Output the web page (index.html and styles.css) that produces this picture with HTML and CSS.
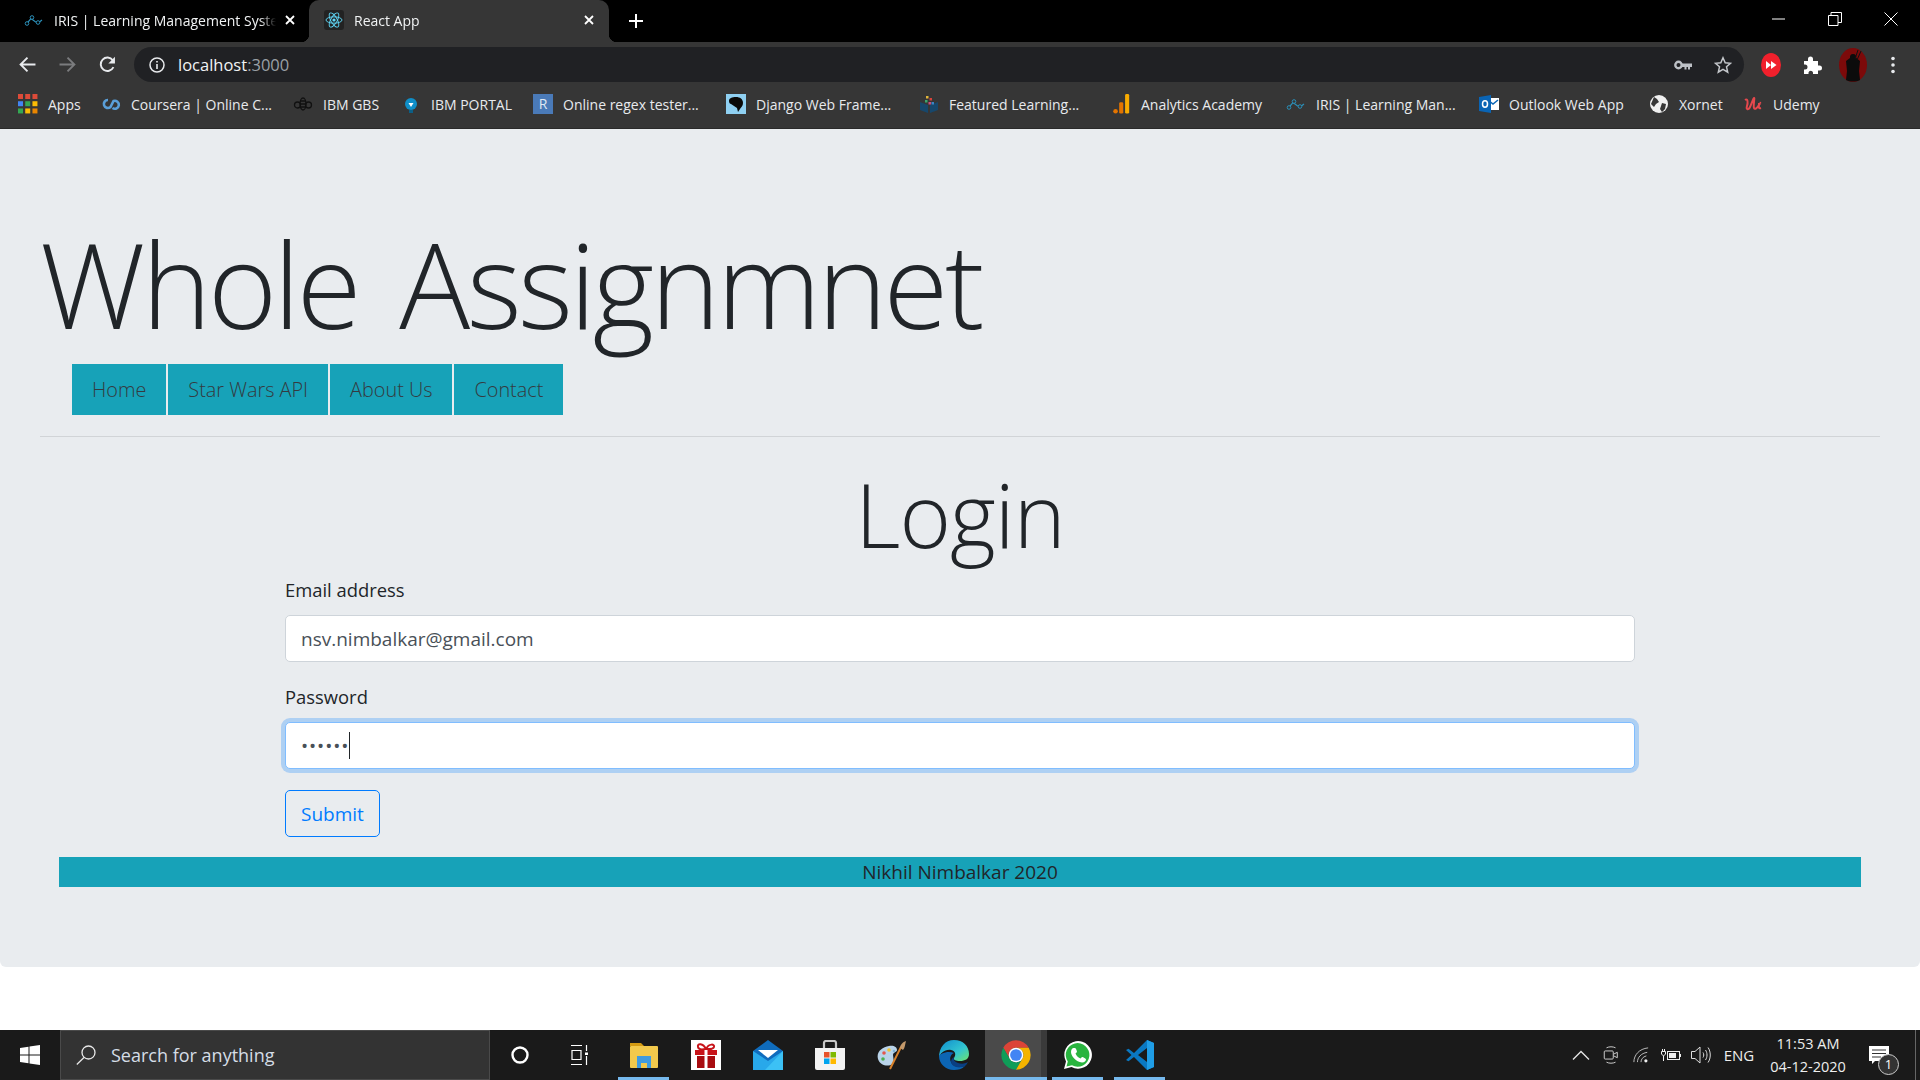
FILE: index.html
```html
<!DOCTYPE html>
<html lang="en">
<head>
    <meta charset="UTF-8">
    <meta name="viewport" content="width=device-width, initial-scale=1.0">
    <title>React App</title>
    <link rel="stylesheet" href="styles.css">
</head>
<body>
    <!-- browser frame -->
    <div class="tabstrip">
        <div class="tab">
            <svg class="tab-icon" viewBox="0 0 20 20"><path d="M2 14.5 7 8.5l4 3 3 1.5 4-3" fill="none" stroke="#2b8fb8" stroke-width="1.2"/><circle cx="3" cy="13.5" r="1.8" fill="#000" stroke="#2b8fb8"/><circle cx="8" cy="7.5" r="1.8" fill="#000" stroke="#2b8fb8"/><circle cx="14" cy="12.5" r="1.8" fill="#000" stroke="#2b8fb8"/></svg>
            <span class="tab-title">IRIS | Learning Management System</span>
            <svg class="tab-close" viewBox="0 0 10 10"><path d="M1 1l8 8M9 1L1 9" stroke="#fff" stroke-width="1.8"/></svg>
        </div>
        <div class="tab tab-active">
            <svg class="tab-icon react-icon" viewBox="0 0 20 20"><rect width="20" height="20" rx="3" fill="#222"/><g fill="none" stroke="#61dafb" stroke-width=".9"><ellipse cx="10" cy="10" rx="8" ry="3.2"/><ellipse cx="10" cy="10" rx="8" ry="3.2" transform="rotate(60 10 10)"/><ellipse cx="10" cy="10" rx="8" ry="3.2" transform="rotate(120 10 10)"/></g><circle cx="10" cy="10" r="1.6" fill="#61dafb"/></svg>
            <span class="tab-title">React App</span>
            <svg class="tab-close" viewBox="0 0 10 10"><path d="M1 1l8 8M9 1L1 9" stroke="#fff" stroke-width="1.8"/></svg>
        </div>
        <svg class="new-tab" viewBox="0 0 14 14"><path d="M7 0v14M0 7h14" stroke="#fff" stroke-width="2"/></svg>
        <div class="window-buttons">
            <svg class="win-btn" viewBox="0 0 14 14"><path d="M0 7h13" stroke="#fff"/></svg>
            <svg class="win-btn" viewBox="0 0 14 14"><path d="M.5 3.5h9.5v10H.5zM3 3.5V.5h10.5v10H10" fill="none" stroke="#fff"/></svg>
            <svg class="win-btn" viewBox="0 0 14 14"><path d="M.5.5l13 13M13.5.5l-13 13" stroke="#fff"/></svg>
        </div>
    </div>

    <div class="toolbar">
        <svg class="nav-icon" viewBox="0 0 16 16"><path d="M15.5 8H2M8 1.5 1.5 8 8 14.5" fill="none" stroke="#e8eaed" stroke-width="1.8"/></svg>
        <svg class="nav-icon" viewBox="0 0 16 16"><path d="M.5 8H14M8 1.5 14.5 8 8 14.5" fill="none" stroke="#7b7c7e" stroke-width="1.8"/></svg>
        <svg class="nav-icon" viewBox="0 0 16 16"><path d="M13.6 10.5A6.3 6.3 0 1 1 13 4" fill="none" stroke="#e8eaed" stroke-width="1.8"/><path d="M15 .8V7H8.8z" fill="#e8eaed"/></svg>
        <div class="omnibox">
            <svg class="info-icon" viewBox="0 0 16 16"><circle cx="8" cy="8" r="7" fill="none" stroke="#e8eaed" stroke-width="1.5"/><path d="M8 7v5M8 4v1.6" stroke="#e8eaed" stroke-width="1.6"/></svg>
            <span class="url">localhost<span class="url-port">:3000</span></span>
            <svg class="omni-key" viewBox="0 0 18 10"><circle cx="4.5" cy="5" r="3.2" fill="none" stroke="#bdc1c6" stroke-width="2.4"/><path d="M8 3.500h10v3.500H16V9.500h-2V7h-1.500v2.500h-2V7H8z" fill="#bdc1c6"/></svg>
            <svg class="omni-star" viewBox="0 0 18 18"><path d="M9 1.8l2.2 5 5.3.5-4 3.5 1.200 5.300L9 13.300l-4.700 2.800 1.200-5.300-4-3.500 5.300-.5z" fill="none" stroke="#c4c7cb" stroke-width="1.5"/></svg>
        </div>
        <div class="ext-icons">
            <svg class="ext" viewBox="0 0 20 24"><ellipse cx="10" cy="12" rx="10" ry="12" fill="#f1202c"/><path d="M5 8l5 4-5 4zM10 8l5.5 4-5.5 4z" fill="#fff"/></svg>
            <svg class="ext" viewBox="0 0 20 20"><path d="M2 6h4V4a2.500 2.500 0 0 1 5 0v2h5v4.500h1.500a2.500 2.500 0 0 1 0 5H16V19H11v-1.500a2.300 2.300 0 0 0-4.500 0V19H2v-4.500h1a2.500 2.500 0 0 0 0-5H2z" fill="#fff"/></svg>
            <svg class="ext ext-avatar" viewBox="0 0 28 34"><ellipse cx="14" cy="17" rx="14" ry="17" fill="#7c0a0a"/><path d="M14 6c2.500 0 3.500 2 3.300 4l3.700 3-1 10 1 9c-4 2-10 2-14 0l1-9-1-10 4-3c-.2-2 .5-4 3-4z" fill="#0c0c0c"/><path d="M19 2l-3 9M22 3l-4 9" stroke="#111" stroke-width="1"/></svg>
            <svg class="ext ext-menu" viewBox="0 0 4 18"><circle cx="2" cy="2.5" r="1.8" fill="#e8eaed"/><circle cx="2" cy="9" r="1.8" fill="#e8eaed"/><circle cx="2" cy="15.5" r="1.8" fill="#e8eaed"/></svg>
        </div>
    </div>

    <div class="bookmarks">
        <div class="bookmark">
            <svg class="bm-icon" viewBox="0 0 18 18"><rect x="0" y="0" width="4.5" height="4.5" fill="#dd4b39"/><rect x="6.5" y="0" width="4.5" height="4.5" fill="#dd4b39"/><rect x="13" y="0" width="4.5" height="4.5" fill="#dd4b39"/><rect x="0" y="6.5" width="4.5" height="4.5" fill="#4285f4"/><rect x="6.5" y="6.5" width="4.5" height="4.5" fill="#34a853"/><rect x="13" y="6.5" width="4.5" height="4.5" fill="#fbbc05"/><rect x="0" y="13" width="4.5" height="4.5" fill="#34a853"/><rect x="6.5" y="13" width="4.5" height="4.5" fill="#fbbc05"/><rect x="13" y="13" width="4.5" height="4.5" fill="#ea8600"/></svg>
            <span>Apps</span>
        </div>
        <div class="bookmark">
            <svg class="bm-icon" viewBox="0 0 20 20"><path d="M7 6a4 4 0 1 0 2.5 7l3-6a4 4 0 1 1-1 7" fill="none" stroke="#5a9fd8" stroke-width="2.6"/></svg>
            <span>Coursera | Online C...</span>
        </div>
        <div class="bookmark">
            <svg class="bm-icon" viewBox="0 0 20 20"><g fill="none" stroke="#111" stroke-width="1.3"><ellipse cx="10" cy="10" rx="3" ry="6"/><circle cx="4.5" cy="11" r="3"/><circle cx="15.5" cy="11" r="3"/><path d="M7 7h6M7 10h6M7 13h6"/></g></svg>
            <span>IBM GBS</span>
        </div>
        <div class="bookmark">
            <svg class="bm-icon" viewBox="0 0 20 20"><circle cx="10" cy="10" r="6" fill="#0f8ec7"/><path d="M7.5 9h5L10 13z" fill="#fff"/><rect x="8" y="16" width="4" height="3" fill="#0b5f86"/><path d="M10 0v2M3 2l1.500 1.500M17 2l-1.500 1.500" stroke="#2a3a48" stroke-width="1.2"/></svg>
            <span>IBM PORTAL</span>
        </div>
        <div class="bookmark">
            <span class="bm-letter">R</span>
            <span>Online regex tester...</span>
        </div>
        <div class="bookmark">
            <svg class="bm-icon" viewBox="0 0 20 20"><rect width="20" height="20" fill="#8fd0f2"/><path d="M3 7c0-3 3-4 7-4 4 0 7 2 7 6 0 3-2 4-3 6l-2 3-1-4-3-2-3-2c-1 0-2-1-2-3z" fill="#0a0a0a"/></svg>
            <span>Django Web Frame...</span>
        </div>
        <div class="bookmark">
            <svg class="bm-icon" viewBox="0 0 20 20"><path d="M1 8l8 3v8l-8-3zM19 8l-8 3v8l8-3z" fill="#17476b"/><rect x="7" y="2" width="2.5" height="2.5" fill="#e2b63a"/><rect x="10.5" y="4" width="2.5" height="2.5" fill="#d8433a"/><rect x="6" y="6" width="2.5" height="2.5" fill="#3aa76d"/><rect x="9.5" y="8" width="2.5" height="2.5" fill="#c84a7c"/><rect x="12.5" y="8" width="2.5" height="2.5" fill="#3a86c8"/></svg>
            <span>Featured Learning...</span>
        </div>
        <div class="bookmark">
            <svg class="bm-icon" viewBox="0 0 20 22"><circle cx="4" cy="19" r="2.5" fill="#e37400"/><rect x="8" y="9" width="4.5" height="12.500" rx="1.5" fill="#e37400"/><rect x="14.5" y="0" width="4.5" height="21.5" rx="1.5" fill="#f9ab00"/></svg>
            <span>Analytics Academy</span>
        </div>
        <div class="bookmark">
            <svg class="bm-icon" viewBox="0 0 20 20"><path d="M2 14.5 7 8.5l4 3 3 1.5 4-3" fill="none" stroke="#2b8fb8" stroke-width="1.2"/><circle cx="3" cy="13.5" r="1.8" fill="#363636" stroke="#2b8fb8"/><circle cx="8" cy="7.5" r="1.8" fill="#363636" stroke="#2b8fb8"/><circle cx="14" cy="12.5" r="1.8" fill="#363636" stroke="#2b8fb8"/></svg>
            <span>IRIS | Learning Man...</span>
        </div>
        <div class="bookmark">
            <svg class="bm-icon" viewBox="0 0 20 20"><rect x="8" y="4" width="12" height="12" fill="#fff"/><path d="M9 6l5 4 5-4" fill="none" stroke="#0a64b4" stroke-width="1.5"/><path d="M0 3l12-2v18L0 17z" fill="#0a64b4"/><ellipse cx="6" cy="10" rx="2.5" ry="3.2" fill="none" stroke="#fff" stroke-width="1.5"/></svg>
            <span>Outlook Web App</span>
        </div>
        <div class="bookmark">
            <svg class="bm-icon" viewBox="0 0 20 20"><circle cx="10" cy="10" r="9" fill="#f0f0f0"/><path d="M5 3l3 2 2 3-3 2-2 3-3-3zM13 9l4 1-1 5-3 3-2-3z" fill="#363636"/></svg>
            <span>Xornet</span>
        </div>
        <div class="bookmark">
            <svg class="bm-icon" viewBox="0 0 20 20"><path d="M2 6c3-2 3 3 2 6s1 5 3 1 3-8 4-9-1 8 0 10 3 0 5-3 1-2 1-2M16 9c0 3-1 6 2 5" fill="none" stroke="#e5484d" stroke-width="2"/></svg>
            <span>Udemy</span>
        </div>
    </div>

    <!-- the react app -->
    <main class="jumbotron">
        <h1 class="display-title">Whole Assignmnet</h1>
        <ul class="main-nav">
            <li class="main-nav-item">Home</li>
            <li class="main-nav-item">Star Wars API</li>
            <li class="main-nav-item">About Us</li>
            <li class="main-nav-item">Contact</li>
        </ul>
        <hr class="divider">
        <h2 class="login-title">Login</h2>
        <form class="login-form">
            <div class="form-group">
                <label class="form-label" for="email">Email address</label>
                <input class="form-control" type="text" id="email" value="nsv.nimbalkar@gmail.com">
            </div>
            <div class="form-group">
                <label class="form-label" for="password">Password</label>
                <div class="form-control form-control-focus" id="password"><span class="dots">••••••</span><span class="caret"></span></div>
            </div>
            <button class="btn-submit" type="button">Submit</button>
        </form>
        <footer class="page-footer">Nikhil Nimbalkar 2020</footer>
    </main>

    <div class="page-rest"></div>

    <!-- windows taskbar -->
    <div class="taskbar">
        <div class="start">
            <svg class="start-logo" viewBox="0 0 20 20"><path d="M0 3l8.5-1.3v7.8H0zM9.5 1.500 20 0v9.500H9.500zM0 10.500h8.500v7.800L0 17zM9.500 10.500H20V20L9.500 18.500z" fill="#fff"/></svg>
        </div>
        <div class="search-box">
            <svg class="search-icon" viewBox="0 0 20 20"><circle cx="12.5" cy="7.5" r="6.5" fill="none" stroke="#e8e8e8" stroke-width="1.3"/><path d="M8 12.5.8 19.5" stroke="#e8e8e8" stroke-width="1.3"/></svg>
            <span>Search for anything</span>
        </div>
        <div class="task-tool"><svg class="tool-icon" viewBox="0 0 20 20"><circle cx="10" cy="10" r="7.5" fill="none" stroke="#fff" stroke-width="2.4"/></svg></div>
        <div class="task-tool"><svg class="tool-icon" viewBox="0 0 20 20"><path d="M1 .5h11M1 19.5h11M2 5.5h9v9H2zM16.5 0v6M16.5 11v9" fill="none" stroke="#fff" stroke-width="1.2"/><rect x="15" y="7.5" width="3" height="2.5" fill="#fff"/></svg></div>
        <div class="task-apps">
            <div class="task-app task-open">
                <svg class="app-icon" viewBox="0 0 30 30"><path d="M1 3h11l3 3h-14z" fill="#d39a12"/><rect x="1" y="6" width="28" height="22" rx="1" fill="#f2c94c"/><path d="M8 28V16h14v12h-4v-5h-6v5z" fill="#3f9be0"/></svg>
            </div>
            <div class="task-app">
                <svg class="app-icon" viewBox="0 0 30 30"><rect width="30" height="30" fill="#fff"/><path d="M15 9c-3-6-9-6-8-2s5 2 8 2c3 0 7 1 8-2s-5-4-8 2z" fill="none" stroke="#c8141a" stroke-width="2"/><rect x="4" y="10" width="22" height="5" fill="#c8141a"/><rect x="6" y="16" width="18" height="12" fill="#a80c10"/><rect x="13.5" y="10" width="3" height="18" fill="#fff"/></svg>
            </div>
            <div class="task-app">
                <svg class="app-icon" viewBox="0 0 30 30"><path d="M15 0 30 11v19H0V11z" fill="#0f6cbd"/><path d="M0 11l15 10 15-10v19H0z" fill="#28a8ea"/><path d="M5 10h20l-10 8z" fill="#fff"/><path d="M30 11v19H12z" fill="#50d9ff" opacity=".5"/></svg>
            </div>
            <div class="task-app">
                <svg class="app-icon" viewBox="0 0 30 30"><path d="M9 8V3a2 2 0 0 1 2-2h8a2 2 0 0 1 2 2v5" fill="none" stroke="#c9c9c9" stroke-width="2.2"/><path d="M0 8h30v20a2 2 0 0 1-2 2H2a2 2 0 0 1-2-2z" fill="#f3f3f3"/><rect x="9" y="12" width="5.5" height="5.5" fill="#e8532b"/><rect x="15.5" y="12" width="5.5" height="5.5" fill="#7fba00"/><rect x="9" y="18.5" width="5.5" height="5.5" fill="#00a4ef"/><rect x="15.5" y="18.5" width="5.5" height="5.5" fill="#ffb900"/></svg>
            </div>
            <div class="task-app">
                <svg class="app-icon" viewBox="0 0 30 30"><path d="M1 19C-1 12 5 7 12 6c5-.7 8 1 8 4 0 2-4 2-4 5s2 6-1 9-12 2-14-5z" fill="#b9d3e8"/><circle cx="7" cy="13" r="1.8" fill="#e2574c"/><circle cx="12" cy="10" r="1.8" fill="#f1c232"/><circle cx="6" cy="19" r="1.8" fill="#4caf50"/><circle cx="17" cy="11" r="1.3" fill="#7fb3d5"/><path d="M13 29 24 7" stroke="#d9822b" stroke-width="2"/><path d="M23 8c0-3 3-6 6-7-1 3-1 7-3 9z" fill="#c49a6c"/></svg>
            </div>
            <div class="task-app">
                <svg class="app-icon" viewBox="0 0 30 30"><defs><linearGradient id="edgeTop" x1="0" y1="0" x2="1" y2="1"><stop offset="0" stop-color="#0f8ccf"/><stop offset=".6" stop-color="#33c6d0"/><stop offset="1" stop-color="#6fe36b"/></linearGradient></defs><path d="M15 0c9 0 15 6 15 14 0 5-4 7-9 7-4 0-7-1-6-3 2-3 2-7-3-8-6-1-11 3-12 8C0 7 6 0 15 0z" fill="url(#edgeTop)"/><path d="M0 16C0 24 7 30 15 30c4 0 8-1 11-4-5 2-12 1-14-4-2-4 0-8 3-9-6-3-15 1-15 3z" fill="#0c65b4"/><path d="M12 22c1 5 8 7 14 4 1-1 2-2 3-4-3 2-7 2-10 1-3-1-5-3-4-6-2 1-3 3-3 5z" fill="#0a3f82"/></svg>
            </div>
            <div class="task-app task-open task-active">
                <svg class="app-icon chrome-icon" viewBox="0 0 48 48"><path d="M4.95 13A22 22 0 0 1 43.05 13H24A11 11 0 0 0 14.47 29.5z" fill="#db4437"/><path d="M4.95 13A22 22 0 0 0 24 46L33.53 29.5A11 11 0 0 1 14.47 29.5z" fill="#0f9d58"/><path d="M24 46A22 22 0 0 0 43.05 13H24A11 11 0 0 1 33.53 29.5z" fill="#f4b400"/><circle cx="24" cy="24" r="11" fill="#fff"/><circle cx="24" cy="24" r="8.8" fill="#4285f4"/></svg>
            </div>
            <div class="task-app task-open">
                <svg class="app-icon" viewBox="0 0 30 30"><path d="M1 29l2-7.5A13.8 13.8 0 1 1 8.5 27z" fill="#fff"/><path d="M3.5 26.5l1.3-5A11.8 11.8 0 1 1 9 25.300z" fill="#29b43f"/><path d="M10.500 8c-1 0-2.500 1.500-2.500 4 0 4 5 10 11 10.500 2.500 0 4-1.500 4-3 0-1-3-2.500-4-2.500l-1.500 1.500c-2-.5-4-2.500-5-5l1.500-1.500c0-1-1-4-2-4z" fill="#fff"/></svg>
            </div>
            <div class="task-app task-open">
                <svg class="app-icon" viewBox="0 0 30 30"><path d="M22 0 9 13 3.500 8.700 1 10l5.500 5L1 20l2.500 1.300L9 17l13 13 7-3V3zm0 8v14l-9-7z" fill="#0a78c2" fill-rule="evenodd"/><path d="M22 0l7 3v24l-7 3z" fill="#1f9de6"/></svg>
            </div>
        </div>
        <div class="tray">
            <div class="tray-slot"><svg class="tray-caret" viewBox="0 0 18 10"><path d="M1 9.5 9 1.5l8 8" fill="none" stroke="#e6e6e6" stroke-width="1.3"/></svg></div>
            <div class="tray-slot"><svg class="tray-icon" viewBox="0 0 16 20"><path d="M3 2c3-1.500 7-1.500 10 0M3 18c3 1.500 7 1.500 10 0" fill="none" stroke="#ddd"/><rect x=".5" y="5.5" width="10" height="9" rx="1" fill="none" stroke="#ddd"/><path d="M11 9l4-2v6l-4-2" fill="none" stroke="#ddd"/></svg></div>
            <div class="tray-slot"><svg class="tray-icon" viewBox="0 0 18 18"><path d="M1 17C1 9 7 2 17 1M5 17c0-5 4-10 11-11M9 17c0-3 2-6 6-7" fill="none" stroke="#ccc"/><circle cx="14.5" cy="15.5" r="1.8" fill="#eee"/></svg></div>
            <div class="tray-slot"><svg class="tray-wide" viewBox="0 0 20 12"><rect x="6.5" y="2.5" width="12" height="8" fill="none" stroke="#eee"/><rect x="8" y="4" width="7" height="5" fill="#eee"/><rect x="18.5" y="5" width="1.5" height="3" fill="#eee"/><path d="M.5 2.500h4v2.500l-2 2-2-2zM1.500 0v2.500M3.500 0v2.500M2.500 7v5" fill="none" stroke="#eee"/></svg></div>
            <div class="tray-slot"><svg class="tray-wide" viewBox="0 0 20 20"><path d="M.5 6.500h3.500L9 2v16L4 13.500H.5z" fill="none" stroke="#ddd"/><path d="M12 7.500c1 1.500 1 3.500 0 5M14.500 5c2 3 2 7 0 10M17 2.500c3 4 3 11 0 15" fill="none" stroke="#ddd"/></svg></div>
            <div class="tray-lang">ENG</div>
            <div class="tray-clock">
                <span>11:53 AM</span>
                <span>04-12-2020</span>
            </div>
            <div class="tray-notify">
                <svg class="notify-icon" viewBox="0 0 20 18"><path d="M0 0h20v15H6l-3 3v-3H0z" fill="#fff"/><path d="M3 4h14M3 7.500h14M3 11h9" stroke="#333"/></svg>
                <span class="notify-badge">1</span>
            </div>
            <div class="show-desktop"></div>
        </div>
    </div>
</body>
</html>
```

FILE: styles.css
```css
html {
    font-size: 20px;
}
* {
    box-sizing: border-box;
}
body {
    margin: 0;
    height: 1080px;
    overflow: hidden;
    display: flex;
    flex-direction: column;
    background-color: #fff;
    font-family: "Open Sans", "Noto Sans", sans-serif;
}

/* browser frame */
.tabstrip {
    height: 42px;
    display: flex;
    align-items: center;
    background-color: #000;
    color: #f1f3f4;
    font-size: 14px;
}
.tab {
    width: 309px;
    height: 42px;
    padding: 0 14px 2px 24px;
    display: flex;
    align-items: center;
    flex-shrink: 0;
}
.tab-active {
    position: relative;
    width: 300px;
    padding: 0 15px 2px;
    background-color: #363636;
    border-radius: 10px 10px 0 0;
}
.tab-active::before,
.tab-active::after {
    content: "";
    position: absolute;
    bottom: 0;
    width: 8px;
    height: 8px;
}
.tab-active::before {
    left: -8px;
    background: radial-gradient(circle at 0 0, transparent 8px, #363636 8.5px);
}
.tab-active::after {
    right: -8px;
    background: radial-gradient(circle at 100% 0, transparent 8px, #363636 8.5px);
}
.tab-icon {
    width: 20px;
    height: 20px;
    flex-shrink: 0;
    margin-right: 10px;
}
.tab-title {
    flex: 1;
    overflow: hidden;
    white-space: nowrap;
    -webkit-mask-image: linear-gradient(to left, transparent, #000 16px);
    mask-image: linear-gradient(to left, transparent, #000 16px);
}
.tab-close {
    width: 10px;
    height: 10px;
    flex-shrink: 0;
    margin-left: 9px;
}
.new-tab {
    width: 14px;
    height: 14px;
    margin-left: 20px;
}
.window-buttons {
    margin-left: auto;
    display: flex;
    gap: 42px;
    padding: 0 22px 5px 0;
}
.win-btn {
    width: 14px;
    height: 14px;
}

.toolbar {
    height: 40px;
    padding: 5px 0 0 19px;
    display: flex;
    align-items: flex-start;
    background-color: #363636;
}
.nav-icon {
    width: 17px;
    height: 17px;
    margin: 9px 23px 0 0;
}
.omnibox {
    width: 1610px;
    height: 35px;
    margin-left: -5px;
    padding: 0 12px 0 15px;
    display: flex;
    align-items: center;
    background-color: #202124;
    border-radius: 18px;
}
.info-icon {
    width: 16px;
    height: 16px;
    margin-right: 13px;
}
.url {
    flex: 1;
    color: #f1f3f4;
    font-size: 16.5px;
}
.url-port {
    color: #9aa0a6;
}
.omni-key {
    width: 18px;
    height: 10px;
    margin-right: 22px;
}
.omni-star {
    width: 18px;
    height: 18px;
}
.ext-icons {
    display: flex;
    align-items: center;
    height: 35px;
    padding-left: 17px;
}
.ext {
    width: 20px;
    height: 24px;
    margin-right: 21px;
}
.ext-avatar {
    width: 28px;
    height: 34px;
    margin: 0 24px 0 -4px;
}
.ext-menu {
    width: 4px;
    height: 18px;
    margin: 0;
}

.bookmarks {
    height: 47px;
    padding: 0 0 2px 18px;
    display: grid;
    grid-template-columns: 83px 192px 108px 132px 193px 193px 192px 175px 193px 170px 94px auto;
    align-items: center;
    background-color: #363636;
    border-bottom: 1px solid #2a2a2a;
    color: #e8eaed;
    font-size: 14px;
    white-space: nowrap;
}
.bookmark {
    display: flex;
    align-items: center;
    gap: 10px;
}
.bm-icon {
    width: 20px;
    height: 20px;
    flex-shrink: 0;
}
.bm-letter {
    width: 20px;
    height: 20px;
    background-color: #4a7ab8;
    color: #dfe8f3;
    text-align: center;
    line-height: 20px;
    font-size: 14px;
}

/* page */
.jumbotron {
    height: 838px;
    padding: 4rem 2rem;
    background-color: #e9ecef;
    border-radius: 0 0 6px 6px;
    color: #212529;
}
.display-title {
    height: 144px;
    margin: 0 0 .5rem;
    padding-top: 5px;
    font-size: 118px;
    font-weight: 300;
    letter-spacing: -3.5px;
    word-spacing: 14px;
    line-height: 139px;
    white-space: nowrap;
}
.main-nav {
    margin: 0 0 1px 31px;
    padding: 0;
    display: flex;
    list-style: none;
}
.main-nav-item {
    padding: 11px 20px 10px;
    border: 1px solid #e9ecef;
    background-color: #17a2b8;
    color: #343a40;
    font-size: 19.85px;
    font-weight: 300;
    line-height: 30px;
}
.divider {
    margin: 1rem 0;
    border: 0;
    border-top: 1px solid #d1d4d7;
}
.login-title {
    height: 108px;
    margin: 0 0 .5rem;
    padding-top: 6px;
    text-align: center;
    font-size: 88px;
    font-weight: 300;
    letter-spacing: -1px;
    line-height: 102px;
}
.login-form {
    width: 1350px;
    margin: 0 auto 1rem;
}
.form-group {
    margin-bottom: 1rem;
}
.form-group + .form-group {
    margin-bottom: 21px;
}
.form-label {
    display: block;
    margin-bottom: .5rem;
    font-size: 18.4px;
    line-height: 30px;
    color: #212529;
}
.form-control {
    display: block;
    width: 100%;
    height: 47px;
    padding: 7px 15px;
    background-color: #fff;
    border: 1px solid #ced4da;
    border-radius: 5px;
    color: #495057;
    font-family: inherit;
    font-size: 19px;
    line-height: 30px;
    outline: none;
}
.form-control-focus {
    display: flex;
    align-items: center;
    border-color: #80bdff;
    box-shadow: 0 0 0 4px rgba(0, 123, 255, .25);
}
.dots {
    font-size: 19px;
    letter-spacing: .9px;
}
.caret {
    width: 1px;
    height: 27px;
    background-color: #212529;
}
.btn-submit {
    display: block;
    height: 47px;
    padding: 0 15px;
    background: transparent;
    border: 1px solid #007bff;
    border-radius: 5px;
    color: #007bff;
    font-family: inherit;
    font-size: 19px;
}
.page-footer {
    height: 30px;
    margin: 0 19px;
    background-color: #17a2b8;
    color: #212529;
    font-size: 19px;
    line-height: 30px;
    text-align: center;
}
.page-rest {
    flex: 1;
}

/* taskbar */
.taskbar {
    height: 50px;
    display: flex;
    background-color: #1a1a1a;
    color: #eee;
}
.start {
    width: 60px;
    padding: 15px 0 0 20px;
}
.start-logo {
    width: 20px;
    height: 20px;
    display: block;
}
.search-box {
    width: 430px;
    padding-left: 15px;
    display: flex;
    align-items: center;
    gap: 15px;
    background-color: #333;
    border: 1px solid #4a4a4a;
    color: #d5dde6;
    font-size: 18px;
}
.search-icon {
    width: 20px;
    height: 20px;
}
.task-tool {
    width: 60px;
    display: flex;
    align-items: center;
    justify-content: center;
}
.tool-icon {
    width: 20px;
    height: 20px;
}
.task-apps {
    margin-left: 3px;
    display: flex;
}
.task-app {
    width: 62px;
    display: flex;
    align-items: center;
    justify-content: center;
    position: relative;
}
.task-open::after {
    content: "";
    position: absolute;
    left: 5px;
    right: 6px;
    bottom: 0;
    height: 3px;
    background-color: #76b9ed;
}
.task-active {
    background: linear-gradient(to right, #4a4a4a 56px, #3a3a3a 56px);
}
.task-active::after {
    left: 0;
    right: 0;
}
.app-icon {
    width: 30px;
    height: 30px;
}
.chrome-icon {
    width: 32px;
    height: 32px;
}
.tray {
    margin-left: auto;
    display: flex;
    align-items: center;
    height: 50px;
}
.tray-slot {
    width: 30px;
    display: flex;
    justify-content: center;
}
.tray-caret {
    width: 18px;
    height: 10px;
}
.tray-icon {
    width: 16px;
    height: 18px;
}
.tray-wide {
    width: 20px;
    height: 20px;
}
.tray-lang {
    width: 46px;
    text-align: center;
    font-size: 15px;
}
.tray-clock {
    width: 92px;
    display: flex;
    flex-direction: column;
    align-items: center;
    gap: 2px;
    font-size: 14.5px;
    line-height: 21px;
}
.tray-notify {
    width: 61px;
    padding-left: 15px;
    position: relative;
}
.notify-icon {
    width: 20px;
    height: 18px;
    display: block;
}
.notify-badge {
    position: absolute;
    left: 24px;
    top: 8px;
    width: 21px;
    height: 21px;
    background-color: #333;
    border: 1px solid #ccc;
    border-radius: 50%;
    color: #fff;
    font-size: 13px;
    line-height: 19px;
    text-align: center;
}
.show-desktop {
    width: 5px;
    height: 50px;
    border-left: 1px solid #666;
}
```
